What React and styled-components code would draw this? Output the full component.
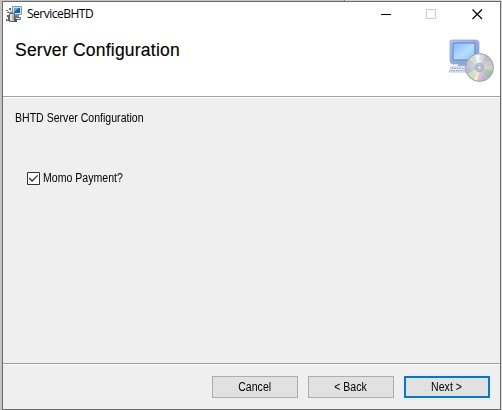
import React from "react";
import styled, { createGlobalStyle } from "styled-components";

const GlobalStyle = createGlobalStyle`
  * { box-sizing: border-box; }
  body { margin: 0; overflow: hidden; background: #c3c3c3; }
`;

const Desktop = styled.div`
  width: 502px;
  height: 410px;
  padding: 1px 1px 0 2px;
  background:
    linear-gradient(#8a8a8a, #8a8a8a) 344px 0 / 1px 1px no-repeat,
    linear-gradient(90deg, #c3c3c3 344px, #d6d6d6 344px);
`;

const Window = styled.main`
  display: flex;
  flex-direction: column;
  width: 499px;
  height: 409px;
  border: 1px solid #6b6b6b;
  background: #efefef;
  color: #000;
  font-family: "Liberation Sans", Arial, sans-serif;
`;

const TitleBar = styled.header`
  display: flex;
  align-items: center;
  height: 25px;
  padding-left: 3px;
  background: #fff;
`;

const AppIcon = styled.svg`
  display: block;
  margin-bottom: 1px;
`;

const WindowTitle = styled.span`
  flex: 1;
  margin: 0 0 1px 5px;
  font: 12px/16px "Open Sans", "Noto Sans", sans-serif;
  letter-spacing: -0.5px;
`;

const Controls = styled.div`
  display: flex;
  gap: 35px;
  height: 11px;
  margin-right: 17px;
  svg { display: block; }
`;

const Banner = styled.section`
  display: flex;
  justify-content: space-between;
  height: 70px;
  padding: 12px 5px 0 12px;
  background: #fff;
  border-bottom: 1px solid #a0a0a0;
`;

const Heading = styled.h1`
  margin: 0;
  font-size: 17.5px;
  line-height: 22px;
  font-weight: 400;
  letter-spacing: 0.22px;
  -webkit-text-stroke: 0.15px #000;
`;

const Body = styled.section`
  height: 266px;
  padding: 12px 12px 0;
  border-top: 1px solid #fff;
  font-size: 12px;
  line-height: 16px;
`;

const CondensedText = styled.span`
  display: inline-block;
  transform: scaleX(0.88);
  transform-origin: ${(p) => (p.$centered ? "center" : "left")};
`;

const Description = styled.p`
  margin: 0;
`;

const Option = styled.label`
  display: flex;
  align-items: center;
  gap: 3px;
  width: max-content;
  margin: 44px 0 0 12px;
  line-height: 17px;
  svg { display: block; }
`;

const Footer = styled.footer`
  display: flex;
  flex: 1;
  justify-content: flex-end;
  align-items: flex-start;
  gap: 10px;
  padding: 12px 10px 0 0;
  border-top: 1px solid #a0a0a0;
  box-shadow: inset 0 1px #fff;
`;

const Button = styled.button`
  width: 86px;
  height: 22px;
  padding: 0;
  border: ${(p) => (p.$primary ? "2px solid #0078d7" : "1px solid #adadad")};
  background: #e1e1e1;
  color: #000;
  font: 12px/18px "Liberation Sans", Arial, sans-serif;
`;

const InstallerIcon = () => (
  <AppIcon width="16" height="16" viewBox="0 0 16 16">
    <path d="M6.5.5h9v8h-9z" fill="#d8e3e9" stroke="#8494a0" />
    <path d="M8 2h6v5H8z" fill="#0867b5" />
    <path d="M8 2h5L8 6z" fill="#43b9ee" />
    <path d="M9 9h4v2H9z" fill="#7d8b92" />
    <path d="M9.500 11.500h5v2h-5z" fill="#d5dbdd" stroke="#66747c" />
    <path d="M0 4h2v1H0zM3 2h2v2H3zM1 6h5v1H1z" fill="#686d6d" />
    <path d="M2 5l3 3M5 4v4" stroke="#a3a9a8" />
    <path d="M3.500 7.500h5v8h-5z" fill="#cbd0cf" stroke="#5e6460" />
    <path d="M5 8v6" stroke="#fff" />
    <path d="M7 9v5" stroke="#8b9290" />
    <path d="M1 9h2v6H0v-2h1z" fill="#59615f" />
    <path d="M9 10h2v2H9z" fill="#47866a" />
    <path d="M9 13h2v3H8z" fill="#4c5452" />
    <path d="M1.5 11v3" stroke="#e5e7e4" />
  </AppIcon>
);

const SetupArtwork = () => (
  <svg width="46" height="44" viewBox="0 0 46 44">
    <defs>
      <linearGradient id="screen" x1="0" y1="0" x2="1" y2="1">
        <stop stopColor="#83b9f5" /><stop offset=".55" stopColor="#b7ddff" /><stop offset="1" stopColor="#8abff5" />
      </linearGradient>
      <linearGradient id="frame" x2="1" y2="1">
        <stop stopColor="#b4c2ee" /><stop offset="1" stopColor="#8198d0" />
      </linearGradient>
      <radialGradient id="discShade">
        <stop offset=".3" stopColor="#fff" stopOpacity=".3" />
        <stop offset=".85" stopColor="#fff" stopOpacity="0" />
        <stop offset="1" stopColor="#777b94" stopOpacity=".35" />
      </radialGradient>
      <filter id="blend"><feGaussianBlur stdDeviation=".7" /></filter>
      <clipPath id="discClip"><circle cx="30.5" cy="28.5" r="14" /></clipPath>
    </defs>
    <path d="M1 3Q1 1 3 1H28L30 3V22L28 25H3L1 23Z" fill="url(#frame)" stroke="#8c9fd2" strokeWidth=".7" />
    <path d="M4 4h22v17H4z" fill="url(#screen)" stroke="#5286dc" />
    <path d="M10 25h12v2H8z" fill="#9aaad0" />
    <path d="M2 28h25v5H0z" fill="#e9effa" stroke="#a3aec5" strokeWidth=".7" />
    <path d="M3 29.5h23M2 31.5h25" stroke="#939fb9" strokeWidth="1" strokeDasharray="1.5 1" />
    <g clipPath="url(#discClip)">
      <g filter="url(#blend)">
        <path d="M14 12h33v33H14z" fill="#c1c4cf" />
        <path d="M30.5 28.500L14 16L23 10Z" fill="#c9ddcf" />
        <path d="M30.5 28.5L23 10H31Z" fill="#f4f5f3" />
        <path d="M30.5 28.5L31 10H39Z" fill="#d7d7e2" />
        <path d="M30.5 28.5L39 10L47 18Z" fill="#b5bfc0" />
        <path d="M30.5 28.5L47 18V25Z" fill="#d0bad1" />
        <path d="M30.5 28.5L47 25V33Z" fill="#c1d2b6" />
        <path d="M30.5 28.5L47 33L41 45Z" fill="#a2bcad" />
        <path d="M30.5 28.5L41 45H34Z" fill="#b7b5d7" />
        <path d="M30.5 28.5L34 45H28Z" fill="#e4b1d1" />
        <path d="M30.5 28.5L28 45H22Z" fill="#f1edac" />
        <path d="M30.5 28.5L22 45L14 37Z" fill="#c7dfbd" />
        <path d="M30.5 28.5L14 37V29Z" fill="#c8b3d6" />
      </g>
      <circle cx="30.5" cy="28.5" r="14" fill="url(#discShade)" />
    </g>
    <circle cx="30.5" cy="28.5" r="14" fill="none" stroke="#9294a8" strokeWidth=".8" />
    <circle cx="30.5" cy="28.5" r="4.2" fill="#bdc4d0" stroke="#99a0ac" strokeWidth=".7" />
    <circle cx="30.5" cy="28.5" r="1.8" fill="#edf0f3" stroke="#89929e" strokeWidth=".6" />
  </svg>
);

const WindowControls = () => (
  <Controls>
    <svg width="10" height="11"><path d="M0 5.5h10" stroke="#000" /></svg>
    <svg width="10" height="11"><path d="M.5.5h9v9h-9z" fill="none" stroke="#ccc" /></svg>
    <svg width="12" height="11"><path d="M1.5.5l9.5 9.5M11 .5L1.5 10" stroke="#000" strokeWidth="1.2" /></svg>
  </Controls>
);

const CheckMark = () => (
  <svg width="13" height="13" role="img" aria-label="Checked">
    <path d="M.5.5h12v12H.5z" fill="#fff" stroke="#333" />
    <path d="M2.2 6l2.9 3 5.6-5.6" fill="none" stroke="#333" strokeWidth="1.3" />
  </svg>
);

export default function App() {
  return (
    <>
      <GlobalStyle />
      <Desktop>
        <Window>
          <TitleBar><InstallerIcon /><WindowTitle>ServiceBHTD</WindowTitle><WindowControls /></TitleBar>
          <Banner><Heading>Server Configuration</Heading><SetupArtwork /></Banner>
          <Body>
            <Description><CondensedText>BHTD Server Configuration</CondensedText></Description>
            <Option><CheckMark /><CondensedText>Momo Payment?</CondensedText></Option>
          </Body>
          <Footer>
            <Button><CondensedText $centered>Cancel</CondensedText></Button>
            <Button><CondensedText $centered>&lt; Back</CondensedText></Button>
            <Button $primary><CondensedText $centered>Next &gt;</CondensedText></Button>
          </Footer>
        </Window>
      </Desktop>
    </>
  );
}
